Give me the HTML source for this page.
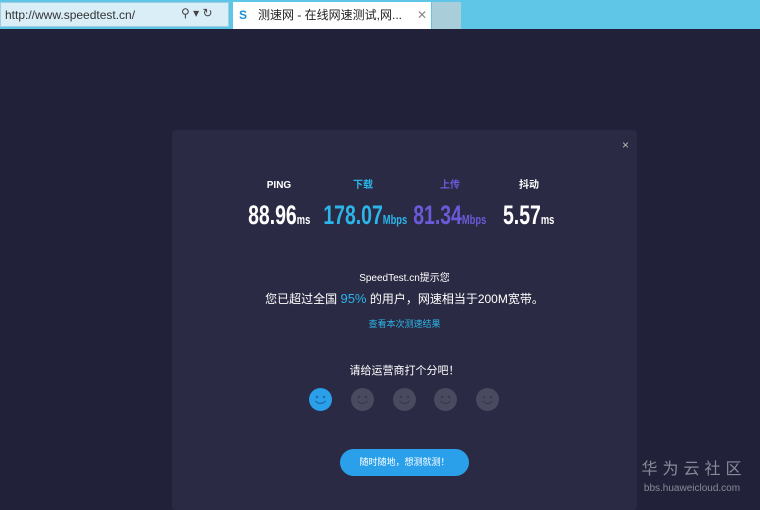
<!DOCTYPE html>
<html><head><meta charset="utf-8"><style>
body{margin:0;width:760px;height:504px;overflow:hidden;background:#21223a;font-family:"Liberation Sans","Noto Sans CJK SC",sans-serif;position:relative}
.top{position:absolute;left:0;top:0;width:760px;height:29px;background:#5fc6e8}
.addr{position:absolute;left:0;top:2px;width:229px;height:25px;background:#d9eef7;border:1px solid #9ccfe2;box-sizing:border-box}
.addr span{position:absolute;left:4px;top:5px;font-size:12px;color:#333}
.tab{position:absolute;left:233px;top:2px;width:198px;height:27px;background:#fff}
.tab span{position:absolute;left:25px;top:6px;font-size:12px;color:#222;line-height:14px}
.tab2{position:absolute;left:432px;top:2px;width:29px;height:27px;background:#a9cdd9}
.modal{position:absolute;left:172px;top:130px;width:465px;height:380px;background:#2b2a44;border-radius:4px}
.c{position:absolute;text-align:center;color:#fff;white-space:nowrap}
.lab{font-size:10px;font-weight:bold;top:50px;width:80px;line-height:12px}
.num{top:71px;width:110px;height:30px}
.num b{display:inline-block;font-weight:bold;font-size:27px;line-height:28px;transform:scaleX(.72);transform-origin:center}
.num small{font-size:13px}
svg.face{position:absolute;top:258px;width:23px;height:23px}
</style></head><body>
<div class="top">
<div class="addr"><span>http://www.speedtest.cn/</span><span style="left:180px;top:3px;color:#444">⚲ ▾ ↻</span></div>
<div class="tab"><span style="left:6px;color:#1a8fd8;font-weight:bold;top:6px">S</span><span>测速网 - 在线网速测试,网...</span><span style="left:184px;color:#888">✕</span></div>
<div class="tab2"></div>
</div>
<div class="modal">
<div class="c" style="right:8px;top:8px;font-size:12px;color:#bbb">×</div>
<div class="c lab" style="left:67px">PING</div>
<div class="c lab" style="left:151px;color:#2bb5e8">下载</div>
<div class="c lab" style="left:238px;color:#6a5ad8">上传</div>
<div class="c lab" style="left:317px">抖动</div>
<div class="c num" style="left:52px"><b>88.96<small>ms</small></b></div>
<div class="c num" style="left:135px;color:#2bb5e8"><b>178.07<small>Mbps</small></b></div>
<div class="c num" style="left:223px;color:#6a5ad8"><b>81.34<small>Mbps</small></b></div>
<div class="c num" style="left:302px"><b>5.57<small>ms</small></b></div>
<div class="c" style="left:0;width:465px;top:139px;font-size:10px">SpeedTest.cn提示您</div>
<div class="c" style="left:0;width:465px;top:160px;font-size:12px">您已超过全国 <span style="color:#2bb5e8;font-size:13px">95%</span> 的用户，网速相当于200M宽带。</div>
<div class="c" style="left:0;width:465px;top:187px;font-size:9px;color:#2bb5e8">查看本次测速结果</div>
<div class="c" style="left:0;width:465px;top:232px;font-size:11px">请给运营商打个分吧！</div>
<svg class="face" style="left:137px" viewBox="0 0 23 23"><circle cx="11.5" cy="11.5" r="11.5" fill="#2aa0ea"/><circle cx="8" cy="9" r="1.3" fill="#1a6fb0"/><circle cx="15" cy="9" r="1.3" fill="#1a6fb0"/><path d="M6.5 13 Q11.5 18 16.5 13" stroke="#1a6fb0" stroke-width="1.5" fill="none"/></svg>
<svg class="face" style="left:179px" viewBox="0 0 23 23"><circle cx="11.5" cy="11.5" r="11.5" fill="#494960"/><circle cx="8" cy="9" r="1.3" fill="#3a3a50"/><circle cx="15" cy="9" r="1.3" fill="#3a3a50"/><path d="M6.5 13 Q11.5 18 16.5 13" stroke="#3a3a50" stroke-width="1.5" fill="none"/></svg>
<svg class="face" style="left:221px" viewBox="0 0 23 23"><circle cx="11.5" cy="11.5" r="11.5" fill="#494960"/><circle cx="8" cy="9" r="1.3" fill="#3a3a50"/><circle cx="15" cy="9" r="1.3" fill="#3a3a50"/><path d="M6.5 13 Q11.5 18 16.5 13" stroke="#3a3a50" stroke-width="1.5" fill="none"/></svg>
<svg class="face" style="left:262px" viewBox="0 0 23 23"><circle cx="11.5" cy="11.5" r="11.5" fill="#494960"/><circle cx="8" cy="9" r="1.3" fill="#3a3a50"/><circle cx="15" cy="9" r="1.3" fill="#3a3a50"/><path d="M6.5 13 Q11.5 18 16.5 13" stroke="#3a3a50" stroke-width="1.5" fill="none"/></svg>
<svg class="face" style="left:304px" viewBox="0 0 23 23"><circle cx="11.5" cy="11.5" r="11.5" fill="#494960"/><circle cx="8" cy="9" r="1.3" fill="#3a3a50"/><circle cx="15" cy="9" r="1.3" fill="#3a3a50"/><path d="M6.5 13 Q11.5 18 16.5 13" stroke="#3a3a50" stroke-width="1.5" fill="none"/></svg>
<div class="c" style="left:168px;top:319px;width:129px;height:27px;line-height:27px;border-radius:14px;background:#2aa0ea;font-size:9px">随时随地，想测就测！</div>
</div>
<div class="c" style="left:638px;top:460px;width:112px;font-size:16px;line-height:20px;color:#8a8a98;letter-spacing:5px">华为云社区</div>
<div class="c" style="left:636px;top:483px;width:112px;font-size:10px;line-height:12px;color:#8a8a98">bbs.huaweicloud.com</div>
</body></html>
